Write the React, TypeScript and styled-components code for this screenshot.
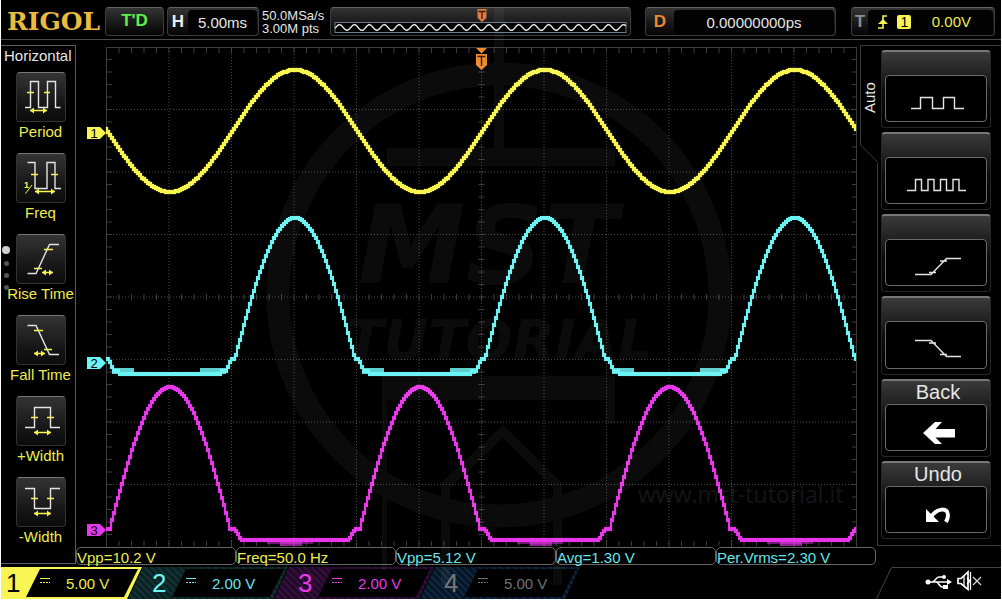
import React from "react";
import styled, { createGlobalStyle, css } from "styled-components";

const YELLOW = "#f8f552";
const CYAN = "#6cf5f5";
const MAGENTA = "#e838ea";
const ORANGE = "#ee8a2e";
const YELLOW_TEXT = "#eeeb50";
const CYAN_TEXT = "#66e6e6";
const SANS = '"Liberation Sans", Arial, sans-serif';

const GlobalStyle = createGlobalStyle`
  *, *::before, *::after { box-sizing: border-box; }
  body { margin: 0; background: #fff; font-family: ${SANS}; font-size: 15px; }
  button { font: inherit; margin: 0; padding: 0; border: 0; background: none; color: inherit; cursor: pointer; }
  h1, h2, ul, dl, dd { margin: 0; padding: 0; font: inherit; list-style: none; }
  svg { display: block; }
`;

const Screen = styled.div`
  min-width: 900px;
  border: 1px solid #fff;
  border-top: 0;
  background: #000;
  color: #e6e6e6;
  overflow: hidden;
`;

/* ---------- top bar ---------- */

const TopBar = styled.header`
  display: flex;
  align-items: center;
  height: 40px;
  padding: 4px 6px 0 6px;
  border-bottom: 1px solid #4a4a4a;
`;

const Brand = styled.h1`
  width: 98px;
  font: bold 25px/30px "DejaVu Serif", serif;
  color: #eabb3c;
  white-space: nowrap;
`;

const panelFace = css`
  border: 1px solid #3c3c3c;
  border-top-color: #666;
  border-radius: 4px;
  background: linear-gradient(#343434, #161616 60%, #050505);
`;

const RunState = styled.button`
  ${panelFace}
  width: 59px;
  height: 29px;
  margin-right: 3px;
  padding-bottom: 2px;
  font-size: 17px;
  font-weight: bold;
  color: #5ef04c;
`;

const Readout = styled.div<{ $width: number; $gapBefore?: number }>`
  ${panelFace}
  display: flex;
  align-items: center;
  width: ${(p) => p.$width}px;
  height: 29px;
  margin-left: ${(p) => p.$gapBefore ?? 0}px;
`;

const ReadoutKey = styled.span<{ $color: string; $width: number }>`
  width: ${(p) => p.$width}px;
  text-align: center;
  font-size: 17px;
  font-weight: bold;
  color: ${(p) => p.$color};
`;

const ReadoutValue = styled.span<{ $color?: string }>`
  display: flex;
  flex: 1;
  align-items: center;
  justify-content: center;
  height: 24px;
  margin-right: 1px;
  padding-top: 2px;
  border-radius: 4px;
  background: #020202;
  color: ${(p) => p.$color ?? "#e6e6e6"};
  white-space: nowrap;
`;

const TriggerValue = styled(ReadoutValue)`
  justify-content: space-between;
  padding: 0 22px 0 10px;
`;

const SourceBadge = styled.span`
  width: 14px;
  height: 14px;
  margin: 0 11px 0 0;
  border-radius: 2px;
  background: ${YELLOW};
  color: #000;
  font-size: 14px;
  line-height: 15px;
  text-align: center;
`;

const Sampling = styled.div`
  width: 71px;
  padding-left: 3px;
  font-size: 13px;
  line-height: 13px;
  white-space: nowrap;
`;

const Overview = styled.div`
  ${panelFace}
  flex: 1;
  height: 29px;
  padding: 0 3px;
`;

/* ---------- main area ---------- */

const Main = styled.main`
  display: grid;
  grid-template-columns: 75px 1fr 141px;
  grid-template-areas: "measure plot menu" "measure results results";
  padding: 5px 0 2px;
`;

const MeasurePanel = styled.nav`
  grid-area: measure;
  position: relative;
  margin-bottom: 1px;
  padding-left: 3px;
  border: solid #5c5c5c;
  border-width: 1px 1px 1px 0;
  text-align: center;
`;

const PanelTitle = styled.h2`
  height: 26px;
  line-height: 20px;
  text-align: left;
`;

const MeasureList = styled.ul`
  display: grid;
  gap: 11px;
`;

const MeasureButton = styled.button`
  display: flex;
  flex-direction: column;
  align-items: center;
  width: 100%;
  padding-left: 2px;
  color: ${YELLOW_TEXT};
  line-height: 20px;
  white-space: nowrap;
`;

const MeasureFace = styled.span`
  width: 50px;
  height: 50px;
  border: 1px solid #333;
  border-top-color: #777;
  border-radius: 4px;
  background: linear-gradient(#343434, #141414 70%, #0c0c0c);
`;

const PageDots = styled.div`
  position: absolute;
  top: 200px;
  left: 1px;
  display: flex;
  flex-direction: column;
  align-items: center;
  gap: 7px;
`;

const Dot = styled.i<{ $active?: boolean }>`
  width: ${(p) => (p.$active ? 8 : 5)}px;
  height: ${(p) => (p.$active ? 8 : 5)}px;
  border-radius: 50%;
  background: ${(p) => (p.$active ? "#d0d0d0" : "#555")};
`;

const Plot = styled.section`
  grid-area: plot;
  position: relative;
`;

const Graph = styled.svg`
  width: 100%;
  height: auto;
`;

const Watermark = styled.svg`
  position: absolute;
  inset: 0;
  z-index: 1;
  width: 100%;
  height: 100%;
  overflow: visible;
  pointer-events: none;
`;

const Menu = styled.nav`
  grid-area: menu;
  display: flex;
  margin: 0 0 1px 18px;
  padding: 4px 10px 6px 0;
  border-top: 1px solid #3a3a3a;
  border-bottom: 1px solid #3a3a3a;
`;

const MenuSide = styled.div`
  display: flex;
  flex-direction: column;
  width: 18px;
  margin: -5px 3px -7px -18px;
`;

const MenuTab = styled.h2`
  display: flex;
  justify-content: center;
  height: 100px;
  padding-bottom: 4px;
  border: solid #3a3a3a;
  border-width: 0 1px 1px 0;
  line-height: 18px;
  writing-mode: vertical-rl;
  transform: rotate(180deg);
`;

const MenuEdge = styled.div`
  flex: 1;
  border-right: 1px solid #3a3a3a;
`;

const MenuList = styled.ul`
  display: grid;
  flex: 1;
  grid-auto-rows: 1fr;
  gap: 4px;
`;

const MenuButton = styled.button`
  display: flex;
  flex-direction: column;
  width: 100%;
  height: 100%;
  padding: 0 3px 5px;
  border: 1px solid #262626;
  border-top: 2px solid #777;
  border-radius: 4px;
  background: linear-gradient(#3a3a3a, #1f1f1f 24px, #0c0c0c 40px, #000);
`;

const MenuTitle = styled.span`
  width: 100%;
  height: 23px;
  padding-left: 4px;
  font-size: 20px;
  line-height: 22px;
`;

const MenuFace = styled.span`
  display: flex;
  flex: 1;
  justify-content: center;
  width: 100%;
  border: 1px solid #6a6a6a;
  border-radius: 4px;
  background: #000;
`;

const Results = styled.dl`
  grid-area: results;
  display: grid;
  grid-template-columns: repeat(5, 1fr);
  margin-right: 125px;
`;

const Result = styled.dd<{ $color: string }>`
  height: 18px;
  border: 1px solid #666;
  border-radius: 5px;
  color: ${(p) => p.$color};
  line-height: 20px;
  white-space: nowrap;
`;

/* ---------- channel bar ---------- */

const BottomBar = styled.footer`
  display: flex;
  justify-content: space-between;
  height: 32px;
`;

const ChannelList = styled.ul`
  display: flex;
  margin-left: -19px;
`;

const Channel = styled.li`
  & + & {
    margin-left: -14px;
  }
`;

const ChannelButton = styled.button<{ $fill: string }>`
  display: flex;
  align-items: stretch;
  width: 160px;
  height: 32px;
  padding: 2px 4px 2px 24px;
  background: ${(p) => p.$fill};
  clip-path: polygon(15px 0, 100% 0, calc(100% - 15px) 100%, 0 100%);
`;

const ChannelNumber = styled.span<{ $color: string }>`
  width: 20px;
  color: ${(p) => p.$color};
  font-size: 26px;
  line-height: 28px;
  text-align: left;
`;

const ChannelScale = styled.span<{ $color: string }>`
  display: flex;
  flex: 1;
  align-items: center;
  gap: 16px;
  padding-left: 14px;
  background: #000;
  color: ${(p) => p.$color};
  clip-path: polygon(14px 0, 100% 0, calc(100% - 14px) 100%, 0 100%);
  white-space: nowrap;
`;

const Coupling = styled.svg`
  margin-bottom: 6px;
`;

const StatusArea = styled.div`
  display: flex;
  width: 125px;
`;

const StatusIcons = styled.div`
  flex: 1;
  padding: 1px 0 0 32px;
  border-top: 1px solid #444;
`;

/* ---------- wave form data ---------- */

const PERIOD = 250;
const LEFT = 106;
const RIGHT = 856;

/** Signed distance from the nearest crest; crests repeat every PERIOD. */
const fromCrest = (x: number, crest: number) => {
  const d = (((x - crest) % PERIOD) + PERIOD) % PERIOD;
  return d > PERIOD / 2 ? d - PERIOD : d;
};

const cosine = (d: number) => Math.cos((2 * Math.PI * d) / PERIOD);

const sine = (x: number) => 131 - 61 * cosine(fromCrest(x, 295));

const cyanWave = (x: number) => {
  const d = Math.abs(fromCrest(x, 295));
  if (d < 60) return 218 + 150 * (1 - cosine(d));
  if (d < 64) return 359;
  if (d < 68) return 359 + (d - 64) * 2.5;
  return d < 74 ? 371 : 374;
};

const magentaWave = (x: number) => {
  const d = Math.abs(fromCrest(x, 170));
  if (d < 60) return 387 + 150 * (1 - cosine(d));
  if (d < 65) return 529;
  if (d < 71) return 529 + (d - 65) * 1.7;
  return 540;
};

/** Builds the trace out of small screen cells, two units wide. */
const trace = (wave: (x: number) => number) => {
  let path = "";
  for (let x = LEFT; x < RIGHT; x += 2) {
    const a = Math.round(wave(x));
    const b = Math.round(wave(x + 2));
    path += `M${x} ${Math.min(a, b) - 2}h2v${Math.abs(a - b) + 4}h-2z`;
  }
  return path;
};

const range = (n: number) => Array.from({ length: n }, (_, i) => i);

const gridLines =
  range(11).map((i) => `M${169 + i * 62.5} 48V547`).join("") +
  range(7).map((i) => `M107 ${109.5 + i * 62.5}H857`).join("");

const tickMarks =
  range(59)
    .map((i) => {
      const x = 119 + i * 12.5;
      return `M${x} 48v5M${x} 294v6M${x} 541v5`;
    })
    .join("") +
  range(39)
    .map((i) => {
      const y = 59.5 + i * 12.5;
      return `M107 ${y}h5M478.5 ${y}h6M852 ${y}h5`;
    })
    .join("");

const VIEW = "76 45 784 502";

const ChannelFlag = ({ n, y, color }: { n: number; y: number; color: string }) => (
  <g>
    <path d={`M87 ${y - 6}h13l6 6l-6 6h-13z`} fill={color} />
    <text x="94" y={y + 5} fontSize="13" textAnchor="middle" fill="#000">
      {n}
    </text>
  </g>
);

const OscilloscopeGraph = () => (
  <Graph viewBox={VIEW} role="img" aria-label="Wave forms of channels 1 to 3" fontFamily={SANS}>
    <path d={gridLines} stroke="#484848" strokeDasharray="1 2" fill="none" />
    <path d={tickMarks} stroke="#3c3c3c" fill="none" />
    <path d="M106.5 547V47.5H857M856.5 47V547" stroke="#3c3c3c" fill="none" />
    <path d={trace(sine)} stroke={YELLOW} strokeOpacity="0.3" fill={YELLOW} />
    <path d={trace(cyanWave)} stroke={CYAN} strokeOpacity="0.15" fill={CYAN} />
    {[-30, 220, 470, 720].map((x) => (
      <path
        key={x}
        d={`M${Math.max(x + 142, 112)} 368h22v6h-22zM${x + 230} 368h26v6h-26z`}
        fill={CYAN}
        fillOpacity="0.85"
      />
    ))}
    <path d={trace(magentaWave)} stroke={MAGENTA} strokeOpacity="0.2" fill={MAGENTA} />
    {[290, 540, 790].map((x) => (
      <g key={x} fill={MAGENTA}>
        <path d={`M${x - 23} 541h46v3h-46z`} fillOpacity="0.45" />
        <path d={`M${x - 10} 541h22v5h-22z`} fillOpacity="0.6" />
      </g>
    ))}
    <ChannelFlag n={1} y={133} color={YELLOW} />
    <ChannelFlag n={2} y={363} color={CYAN} />
    <ChannelFlag n={3} y={530} color={MAGENTA} />
    <path d="M476 48h11l-5.500 5.500z" fill={ORANGE} />
    <path d="M476 54h11v11l-5.500 5l-5.500-5z" fill={ORANGE} />
    <path d="M477.500 56.500h8M481.500 56v10" stroke="#3a1c00" strokeWidth="1.400" />
  </Graph>
);

const TutorialWatermark = () => (
  <Watermark viewBox={VIEW} aria-hidden="true">
    <g
      opacity="0.045"
      fill="#fff"
      fontFamily='"DejaVu Sans", sans-serif'
      fontWeight="bold"
      fontStyle="italic"
    >
      <circle cx="499" cy="295" r="221" fill="none" stroke="#fff" strokeWidth="23" />
      <path d="M494 8h10v140h111v18H387v-18h107z" />
      <path d="M382 376h233v48h-9v-24H387v170h-5z" />
      <path d="M441 585V483L503 425L562 483V585h-9V488L503 438L450 488V585z" />
      <text x="358" y="283" fontSize="108">
        MST
      </text>
      <text x="346" y="359" fontSize="55">
        TUTORIAL
      </text>
    </g>
    <text x="638" y="503" fontFamily='"Open Sans", sans-serif' fontSize="23" fill="#fff" opacity="0.08">
      www.mst-tutorial.it
    </text>
  </Watermark>
);

/* ---------- icons ---------- */

type MeasureIcon = {
  name: string;
  line: string;
  ticks: string;
  arrow: [number, number, number];
  reciprocal?: boolean;
};

const MEASUREMENTS: MeasureIcon[] = [
  {
    name: "Period",
    line: "M8 34.500h5.500V8.500h8V34.500h9V8.500h8V34.500h5",
    ticks: "M10 19.500h7M27 19.500h6",
    arrow: [13, 30, 37.5],
  },
  {
    name: "Freq",
    line: "M10.500 8.500h7.500V34.500h12V8.500h8V34.500h6",
    ticks: "M14 20.500h7M34 20.500h7",
    arrow: [18, 38, 37.5],
    reciprocal: true,
  },
  {
    name: "Rise Time",
    line: "M10.500 38.500h8.500L32.500 9.500h9.500",
    ticks: "M17 33.500h8M27 14.500h9",
    arrow: [25, 36, 37.5],
  },
  {
    name: "Fall Time",
    line: "M10.500 9.500h8.500L32.500 38.500h9.500",
    ticks: "M17 14.500h9M27 33.500h8",
    arrow: [17, 28, 37.5],
  },
  {
    name: "+Width",
    line: "M8 30.500h9.500V10.500h16V30.500h9.500",
    ticks: "M14 20.500h7M30 20.500h7",
    arrow: [17, 34, 35.5],
  },
  {
    name: "-Width",
    line: "M8 10.500h9.500V30.500h16V10.500h9.500",
    ticks: "M14 20.500h7M30 20.500h7",
    arrow: [17, 34, 35.5],
  },
];

const MeasureGlyph = ({ icon }: { icon: MeasureIcon }) => {
  const [from, to, y] = icon.arrow;
  return (
    <svg width="48" height="48" viewBox="0 0 48 48" fill="none" aria-hidden="true">
      <path d={icon.line} stroke="#e4e4e4" strokeWidth="1.400" />
      <path d={`${icon.ticks}M${from} ${y}H${to}`} stroke={YELLOW} strokeWidth="1.300" />
      <path d={`M${from} ${y}l4-3v6zM${to} ${y}l-4-3v6z`} fill={YELLOW} />
      {icon.reciprocal && (
        <>
          <text x="7" y="34" fontSize="9" fontWeight="bold" fill={YELLOW}>
            1
          </text>
          <path d="M8.500 39.500L15 31" stroke={YELLOW} />
        </>
      )}
    </svg>
  );
};

const MENU: { title: string; label: string; art: React.ReactNode }[] = [
  {
    title: "",
    label: "Few periods",
    art: <path d="M25 32.500h9.500v-11h12v11h11v-11h11v11h9.500" />,
  },
  {
    title: "",
    label: "Many periods",
    art: (
      <path d="M21 32.500h8.500v-11h6v11h6.500v-11h6v11h6.500v-11h6v11h6.500v-11h6v11h7" />
    ),
  },
  {
    title: "",
    label: "Rising edge",
    art: <path d="M29 34.500h16L60.500 18.500H75M43 32.500h7M54 21h7" />,
  },
  {
    title: "",
    label: "Falling edge",
    art: <path d="M29 18.500h16L60.500 34.500H75M43 21h7M54 32.500h7" />,
  },
  {
    title: "Back",
    label: "Back",
    art: (
      <path
        d="M37 28L49 17H56L49.500 24H69V32.500H49.500L56 39H49z"
        fill="#fff"
        stroke="none"
      />
    ),
  },
  {
    title: "Undo",
    label: "Undo",
    art: (
      <>
        <path d="M45 30C51 21 62 20 62 28C62 31 61.500 32 60 35" stroke="#fff" strokeWidth="4" />
        <path d="M40 22V35H53z" fill="#fff" stroke="none" />
      </>
    ),
  },
];

const OverviewGraphic = () => {
  const wave = range(147)
    .map((i) => {
      const x = 1 + i * 2;
      const y = 19.5 + 3 * Math.cos((2 * Math.PI * (x - 13)) / 15);
      return `${x},${y.toFixed(1)}`;
    })
    .join(" ");
  return (
    <svg width="100%" height="27" viewBox="0 0 294 27" preserveAspectRatio="none" aria-hidden="true">
      <rect x="1" y="14.500" width="292" height="10" fill="#000" stroke="#6b7a86" />
      <polyline points={wave} fill="none" stroke="#e6e6e6" strokeWidth="1.400" />
      <path d="M144 1h9v9l-4.500 4l-4.500-4z" fill="#e07a48" />
      <path d="M145 3.500h7M148.500 3v8" stroke="#3a1c00" strokeWidth="1.300" />
    </svg>
  );
};

const StatusGlyphs = () => (
  <svg width="62" height="24" viewBox="0 0 62 24" fill="none" role="img" aria-label="USB connected, sound off">
    <circle cx="4" cy="13" r="2.500" fill="#fff" />
    <path d="M4 13H24M8 13c3 0 4-5 7-5h4M12 13c3 0 3 5 6 5h3" stroke="#fff" strokeWidth="1.500" />
    <path d="M23 10l5 3l-5 3z" fill="#fff" />
    <circle cx="20" cy="8" r="2" fill="#fff" />
    <path d="M19 16h5v4h-5z" fill="#fff" />
    <path d="M34 9.500v5h3l7 6V3l-7 6.500z" stroke="#fff" strokeWidth="1.700" />
    <path d="M40 7v10M46.500 3v18M43 9l3 3l-3 3" stroke="#fff" strokeWidth="1.300" />
    <path d="M49 8l8 8M57 8l-8 8" stroke="#ddd" strokeWidth="1.200" />
  </svg>
);

/* ---------- content ---------- */

const RESULTS = [
  { text: "Vpp=10.2 V", color: YELLOW_TEXT },
  { text: "Freq=50.0 Hz", color: YELLOW_TEXT },
  { text: "Vpp=5.12 V", color: CYAN_TEXT },
  { text: "Avg=1.30 V", color: CYAN_TEXT },
  { text: "Per.Vrms=2.30 V", color: CYAN_TEXT },
];

const hatch = (dark: string, light: string) =>
  `repeating-linear-gradient(45deg, ${dark} 0 3px, ${light} 3px 5px)`;

const CHANNELS = [
  { n: 1, scale: "5.00 V", fill: YELLOW, number: "#000", text: YELLOW_TEXT },
  { n: 2, scale: "2.00 V", fill: hatch("#0b2224", "#143234"), number: CYAN, text: CYAN_TEXT },
  { n: 3, scale: "2.00 V", fill: hatch("#22082a", "#34103b"), number: MAGENTA, text: MAGENTA },
  { n: 4, scale: "5.00 V", fill: hatch("#071626", "#0f283f"), number: "#777", text: "#707070" },
];

export default function App() {
  return (
    <Screen>
      <GlobalStyle />
      <TopBar>
        <Brand>RIGOL</Brand>
        <RunState type="button">T'D</RunState>
        <Readout $width={92}>
          <ReadoutKey $color="#eee" $width={20}>H</ReadoutKey>
          <ReadoutValue>5.00ms</ReadoutValue>
        </Readout>
        <Sampling>
          <div>50.0MSa/s</div>
          <div>3.00M pts</div>
        </Sampling>
        <Overview>
          <OverviewGraphic />
        </Overview>
        <Readout $width={191} $gapBefore={14}>
          <ReadoutKey $color={ORANGE} $width={28}>D</ReadoutKey>
          <ReadoutValue>0.00000000ps</ReadoutValue>
        </Readout>
        <Readout $width={144} $gapBefore={15}>
          <ReadoutKey $color="#8c8c8c" $width={16}>T</ReadoutKey>
          <TriggerValue $color={YELLOW_TEXT}>
            <svg width="10" height="14" viewBox="0 0 10 14" fill="none" aria-label="Rising edge">
              <path d="M0 13H5V1H9" stroke={YELLOW} strokeWidth="1.600" />
              <path d="M0 9L5 4L10 9z" fill={YELLOW} />
            </svg>
            <SourceBadge>1</SourceBadge>
            <span>0.00V</span>
          </TriggerValue>
        </Readout>
      </TopBar>

      <Main>
        <MeasurePanel aria-label="Horizontal measurements">
          <PanelTitle>Horizontal</PanelTitle>
          <MeasureList>
            {MEASUREMENTS.map((m) => (
              <li key={m.name}>
                <MeasureButton type="button">
                  <MeasureFace>
                    <MeasureGlyph icon={m} />
                  </MeasureFace>
                  <span>{m.name}</span>
                </MeasureButton>
              </li>
            ))}
          </MeasureList>
          <PageDots>
            <Dot $active />
            <Dot />
            <Dot />
            <Dot />
          </PageDots>
        </MeasurePanel>

        <Plot>
          <OscilloscopeGraph />
          <TutorialWatermark />
        </Plot>

        <Menu aria-label="Auto">
          <MenuSide>
            <MenuTab>Auto</MenuTab>
            <svg width="18" height="18" viewBox="0 0 18 18" aria-hidden="true">
              <path d="M0.500 0L17.500 17" stroke="#3a3a3a" />
            </svg>
            <MenuEdge />
          </MenuSide>
          <MenuList>
            {MENU.map((item) => (
              <li key={item.label}>
                <MenuButton type="button" aria-label={item.label}>
                  <MenuTitle>{item.title}</MenuTitle>
                  <MenuFace>
                    <svg width="100" height="44" viewBox="0 0 100 44" fill="none" stroke="#e4e4e4" strokeWidth="1.400">
                      {item.art}
                    </svg>
                  </MenuFace>
                </MenuButton>
              </li>
            ))}
          </MenuList>
        </Menu>

        <Results>
          {RESULTS.map((r) => (
            <Result key={r.text} $color={r.color}>
              {r.text}
            </Result>
          ))}
        </Results>
      </Main>

      <BottomBar>
        <ChannelList>
          {CHANNELS.map((c) => (
            <Channel key={c.n}>
              <ChannelButton type="button" $fill={c.fill}>
                <ChannelNumber $color={c.number}>{c.n}</ChannelNumber>
                <ChannelScale $color={c.text}>
                  <Coupling width="10" height="8" viewBox="0 0 10 8" aria-hidden="true">
                    <path d="M0 2.500H10" stroke={c.text} />
                    <path d="M0 6.500H10" stroke={c.text} strokeDasharray="2 1" />
                  </Coupling>
                  {c.scale}
                </ChannelScale>
              </ChannelButton>
            </Channel>
          ))}
        </ChannelList>
        <StatusArea>
          <svg width="16" height="32" viewBox="0 0 16 32" aria-hidden="true">
            <path d="M0.500 32L15.500 0.500" stroke="#444" fill="none" />
          </svg>
          <StatusIcons>
            <StatusGlyphs />
          </StatusIcons>
        </StatusArea>
      </BottomBar>
    </Screen>
  );
}
